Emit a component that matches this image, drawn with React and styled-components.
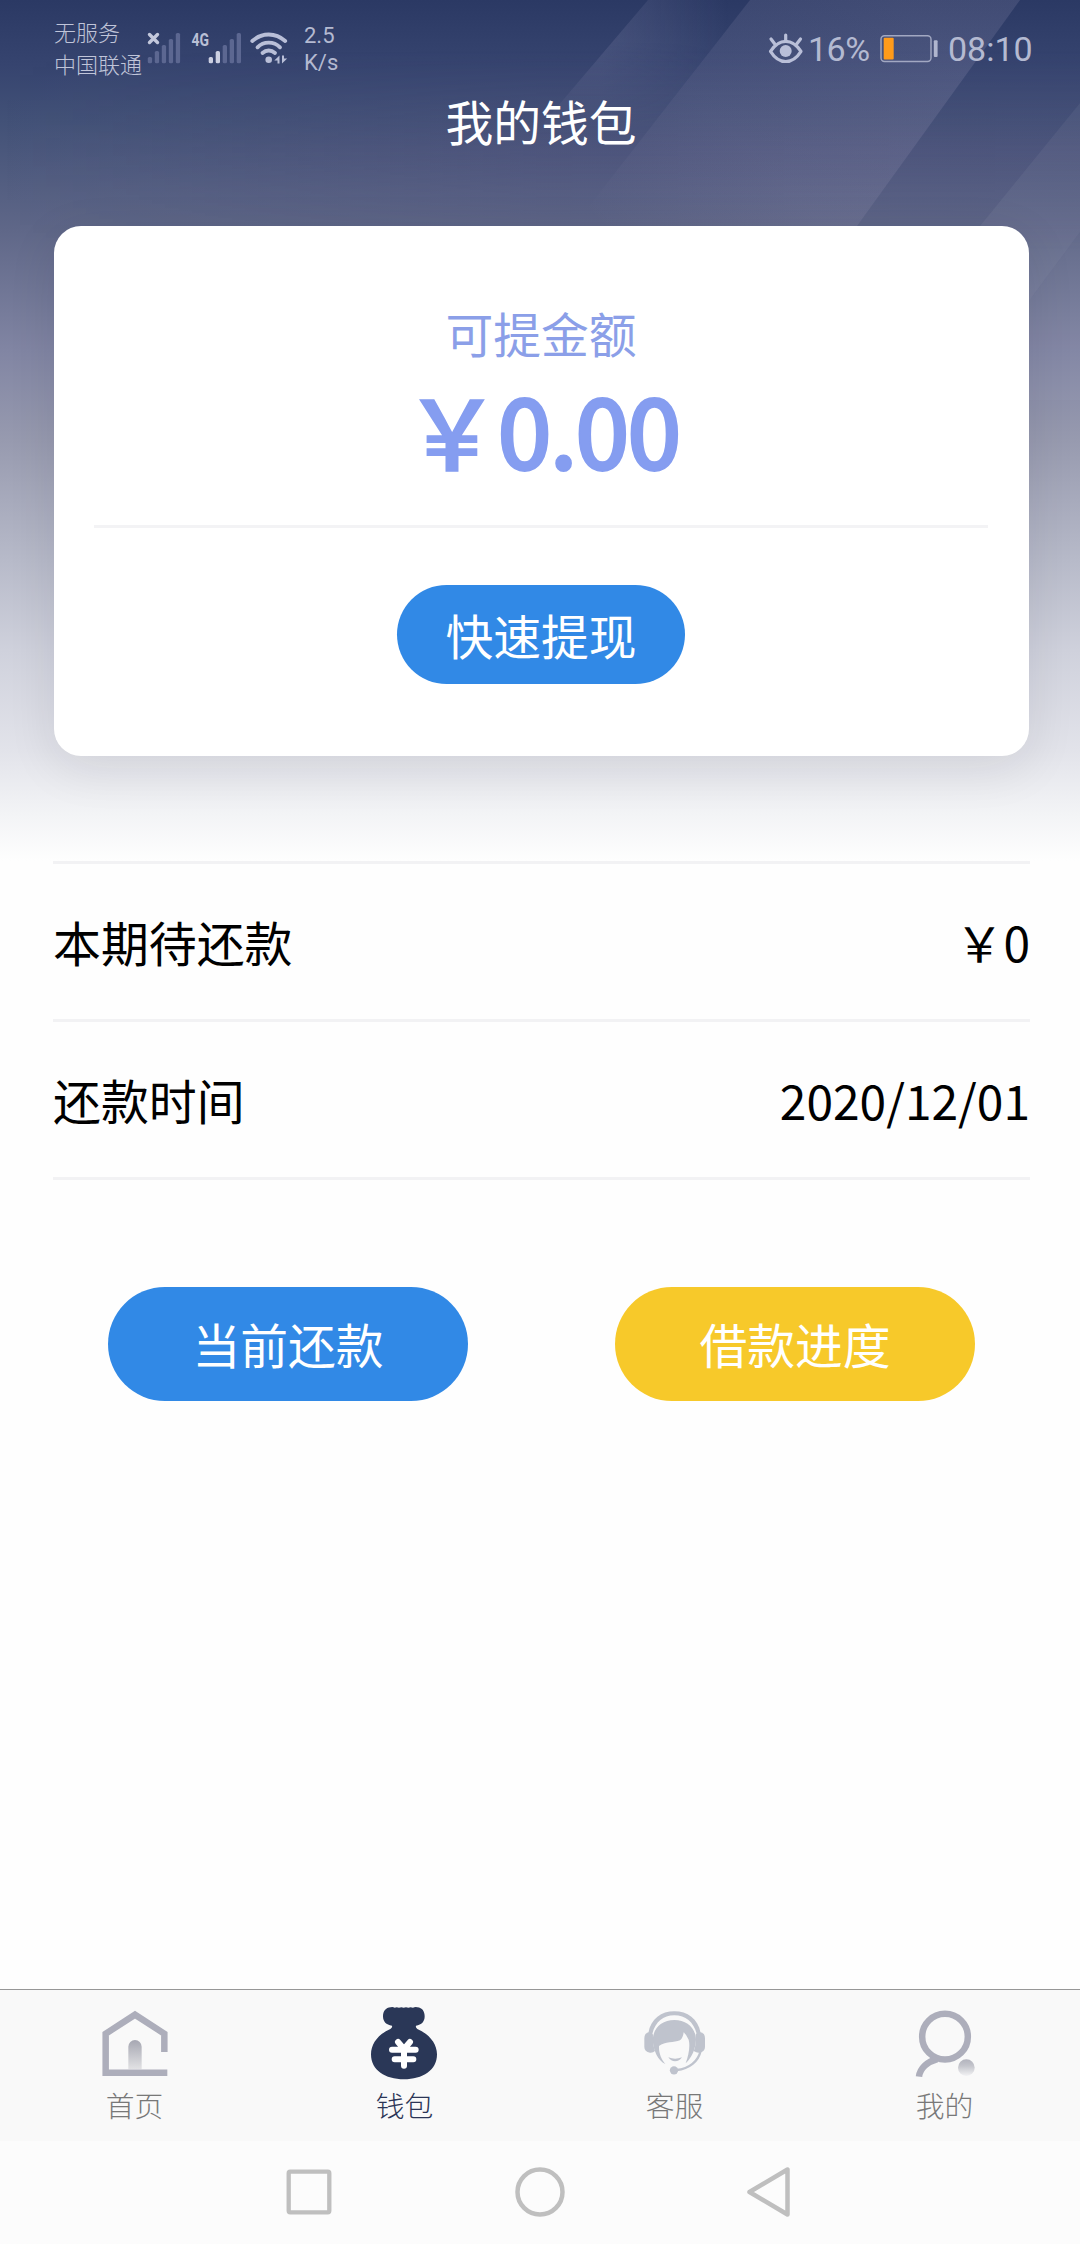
import React, { useState } from "react";
import styled, { createGlobalStyle } from "styled-components";

const GlobalStyle = createGlobalStyle`
  * {
    box-sizing: border-box;
  }
  body {
    margin: 0;
    background: #fefefe;
    font-family: "Noto Sans CJK SC", sans-serif;
  }
  button {
    font-family: inherit;
    border: none;
    padding: 0;
    cursor: pointer;
  }
`;
const Page = styled.div`
  display: flex;
  flex-direction: column;
  width: 1080px;
  height: 2244px;
  overflow: hidden;
`;
const Hero = styled.header`
  position: relative;
  height: 861px;
  background: linear-gradient(
    180deg,
    #2b3964 0px,
    #36446f 65px,
    #425177 120px,
    #5f6788 230px,
    #8185a3 350px,
    #979aaf 440px,
    #b7bac9 560px,
    #cfd1dc 650px,
    #e2e3ea 750px,
    #f3f4f6 815px,
    #fefefe 861px
  );
`;
const Stripes = styled.svg`
  position: absolute;
  top: 0;
  left: 0;
`;
const HeroContent = styled.div`
  position: relative;
`;
const StatusBar = styled.div`
  display: flex;
  justify-content: space-between;
  height: 96px;
  padding: 0 48px 0 54px;
  color: #b4bad1;
`;
const StatusGroup = styled.div`
  display: flex;
  align-items: flex-start;
`;
const Carrier = styled.div`
  width: 92px;
  padding-top: 15px;
  color: #c0c5d9;
  font-size: 22px;
  font-weight: 300;
  line-height: 32px;
  white-space: nowrap;
`;
const NetSpeed = styled.div`
  padding: 22px 0 0 16px;
  font-family: Roboto, sans-serif;
  font-size: 22px;
  line-height: 27px;
`;
const StatusText = styled.div`
  width: ${(props) => props.$width}px;
  padding-top: 29px;
  padding-left: ${(props) => props.$left || 0}px;
  font-family: Roboto, sans-serif;
  font-size: 34px;
  line-height: 40px;
  letter-spacing: ${(props) => props.$spacing || 0}px;
  white-space: nowrap;
`;
const Title = styled.h1`
  margin: 0;
  height: 130px;
  padding: 1px 0 0 2px;
  color: #fff;
  font-size: 47.8px;
  font-weight: 400;
  line-height: 48px;
  text-align: center;
`;
const Card = styled.section`
  display: flex;
  flex-direction: column;
  align-items: center;
  width: 975px;
  height: 530px;
  margin-left: 54px;
  padding: 82px 41px 0 40px;
  border-radius: 27px;
  background: #fff;
  box-shadow: 0 12px 50px rgba(20, 20, 30, 0.09);
`;
const CardLabel = styled.div`
  color: #8b9fe8;
  font-size: 47.8px;
  line-height: 50px;
`;
/* the thin outline brings the medium digits close to bold without widening them */
const Amount = styled.div`
  width: 100%;
  height: 170px;
  padding: 21px 0 0 1px;
  border-bottom: 3px solid #f3f3f5;
  color: #859df0;
  font-size: 96px;
  font-weight: 500;
  line-height: 100px;
  text-align: center;
  letter-spacing: -2.8px;
  -webkit-text-stroke: 1.8px #859df0;
`;
const PillButton = styled.button`
  width: ${(props) => props.$width}px;
  height: ${(props) => props.$height}px;
  margin-top: ${(props) => props.$top || 0}px;
  border-radius: 60px;
  background: ${(props) => props.$color};
  color: #fff;
  font-size: 47.8px;
  line-height: 50px;
`;
const List = styled.div`
  margin: 0 50px 0 53px;
  border-top: 3px solid #f2f2f4;
`;
const Row = styled.div`
  display: flex;
  align-items: center;
  justify-content: space-between;
  height: 158px;
  padding-bottom: 2px;
  border-bottom: 3px solid #f2f2f4;
  color: #000;
  font-size: 47.9px;
  line-height: 50px;
`;
const Actions = styled.div`
  display: flex;
  justify-content: space-between;
  padding: 107px 105px 0 108px;
`;
const TabBar = styled.nav`
  display: flex;
  height: 152px;
  margin-top: auto;
  border-top: 1px solid #969696;
  background: #f9f9f9;
`;
const Tab = styled.button`
  display: flex;
  flex: 1;
  flex-direction: column;
  align-items: center;
  padding-top: 16px;
  background: transparent;
  color: ${(props) => (props.$active ? "#2b3556" : "#787878")};
`;
const TabLabel = styled.span`
  padding-right: 1px;
  font-size: 28.8px;
  font-weight: 300;
  line-height: 49px;
`;
const SystemNav = styled.div`
  display: flex;
  align-items: center;
  justify-content: center;
  gap: 181px;
  height: 103px;
  padding-bottom: 1px;
  background: #fcfcfc;
`;

const barTops = [57, 51, 45, 39, 33];
function Signal({ left, level }) {
  return barTops.map((y, i) => (
    <rect key={y} x={left + i * 7} y={y} width="4.3" height={63.3 - y} rx="1.6"
      fill={i < level ? "#ccd0e2" : "#5c6791"} />
  ));
}

function NoSignalIcon() {
  return (
    <svg width="44" height="70" viewBox="146 0 44 70">
      <Signal left={147.8} level={0} />
      <path d="M149.5 34.5l8 8M157.5 34.5l-8 8" stroke="#c3c8dc" strokeWidth="3.4" strokeLinecap="round" />
    </svg>
  );
}

function MobileIcon() {
  return (
    <svg width="58" height="70" viewBox="190 0 58 70">
      <text x="191.5" y="45.8" textLength="17.5" lengthAdjust="spacingAndGlyphs" fill="#b9bfd5"
        fontFamily="Roboto, sans-serif" fontWeight="700" fontSize="18.5">4G</text>
      <Signal left={208.7} level={2} />
    </svg>
  );
}

function WifiIcon() {
  return (
    <svg width="40" height="70" viewBox="248 0 40 70">
      <g fill="none" stroke="#b9bfd8" strokeWidth="3.8" strokeLinecap="round">
        <path d="M252.3 41Q259.5 34.5 268.7 34.5T285.2 41" />
        <path d="M257.5 47.3Q262 42.7 268.7 42.7T280 47.3" />
        <path d="M262.5 53Q265.3 50.5 268.7 50.5T275 53" />
      </g>
      <circle cx="268.7" cy="59.7" r="3.3" fill="#b9bfd8" />
      <path d="M279.5 55.5v8h-2v-3h-3.2zM282 63.5v-8h2v3h3.2z" fill="#b9bfd8" />
    </svg>
  );
}

function EyeIcon() {
  return (
    <svg width="38" height="70" viewBox="768 0 38 70">
      <g fill="none" stroke="#b9bfd8" strokeWidth="3.2" strokeLinecap="round">
        <path d="M770.5 51.3C775 44.5 780 41.3 785.7 41.3S796.5 44.5 801 51.3C796.5 58.5 791.5 61.5 785.7 61.5S775 58.5 770.5 51.3Z" strokeLinejoin="round" />
        <path d="M785.7 35v6M771 39l4.2 5.5M800.5 39l-4.2 5.5" />
      </g>
      <circle cx="785.7" cy="51" r="6" fill="#b9bfd8" />
    </svg>
  );
}

function BatteryIcon() {
  return (
    <svg width="68" height="70" viewBox="880 0 68 70">
      <rect x="881" y="35.7" width="50" height="25.8" rx="3.5" fill="none" stroke="#a2a8c2" strokeWidth="1.4" />
      <rect x="883.7" y="37.8" width="10" height="21.7" rx="1" fill="#ff9b1a" />
      <rect x="933.8" y="40.3" width="3.8" height="16.8" rx="1" fill="#b0b6ce" />
    </svg>
  );
}

function HomeIcon() {
  return (
    <svg width="74" height="74" viewBox="114 77 222 222">
      <defs>
        <linearGradient id="door" x1="0" y1="0" x2="0" y2="1">
          <stop offset="0" stopColor="#a6a7b2" />
          <stop offset="1" stopColor="#e2e2e4" />
        </linearGradient>
      </defs>
      <path d="M205 267v-68a20 20 0 0 1 40 0v68z" fill="url(#door)" />
      <path d="M313 215V160L225 103L137 160V277H322" fill="none" stroke="#adaebb" strokeWidth="19.5" />
    </svg>
  );
}

function BagIcon() {
  return (
    <svg width="74" height="74" viewBox="924 77 222 222">
      <path fill="#2a3757" d="M992 81Q998 79 1004 82Q1010 79 1017 82Q1024 79 1031 82Q1038 79 1045 82Q1052 79 1059 82Q1066 79 1072 81C1087 82 1094 94 1094 108C1094 124 1085 134 1068 136Q1066 142 1072 146C1105 160 1131 188 1131 222C1131 270 1088 297 1032 297C976 297 933 270 933 222C933 188 958 160 991 146Q998 142 996 136C978 134 969 124 969 108C969 93 977 82 992 81Z" />
      <path d="M1014 185L1032 206L1050 185M996 208H1067M1004 237H1060M1032 206V256" fill="none" stroke="#fff" strokeWidth="18" strokeLinecap="round" strokeLinejoin="round" />
    </svg>
  );
}

function ServiceIcon() {
  return (
    <svg width="74" height="74" viewBox="114 77 222 222">
      <g fill="#bfc3cd">
        <path d="M145 158C153 115 184 93 223 93S294 115 302 158L290 160C280 124 257 105 223 105S167 124 157 160Z" />
        <path d="M147 156Q156 154 159 163Q158 195 165 212Q159 218 150 217Q133 214 133 200V174Q133 158 147 156Z" />
        <path d="M301 156Q290 154 287 163Q289 195 281 212Q290 218 298 217Q315 214 315 200V174Q315 158 301 156Z" />
        <path d="M158 178C160 142 186 119 223 119S287 142 288 178C286 206 277 230 257 249C266 225 271 198 266 178Q260 164 251 156Q249 173 240 180C222 188 195 183 177 197C176 218 184 237 196 251C174 240 160 211 158 178Z" />
        <path d="M205 231Q225 239 246 231Q238 243 225 243Q213 243 205 231Z" />
        <circle cx="222" cy="270" r="12.5" />
      </g>
      <path d="M302 211C295 243 268 265 230 269" fill="none" stroke="#bfc3cd" strokeWidth="7" />
    </svg>
  );
}

function MineIcon() {
  return (
    <svg width="74" height="74" viewBox="924 77 222 222">
      <defs>
        <linearGradient id="dot" x1="0" y1="0" x2="0" y2="1">
          <stop offset="0" stopColor="#b2b3bd" />
          <stop offset="0.4" stopColor="#c4c5cc" />
          <stop offset="1" stopColor="#f2f2f4" />
        </linearGradient>
      </defs>
      <g fill="none" stroke="#adaebb" strokeWidth="19.5">
        <circle cx="1035" cy="169" r="68.5" />
        <path d="M957 289C960 264 982 244 1012 236" />
      </g>
      <circle cx="1099" cy="262" r="25" fill="url(#dot)" />
    </svg>
  );
}

const tabs = [
  { id: "home", name: "首页", Icon: HomeIcon },
  { id: "wallet", name: "钱包", Icon: BagIcon },
  { id: "service", name: "客服", Icon: ServiceIcon },
  { id: "mine", name: "我的", Icon: MineIcon },
];

function App() {
  const [active, setActive] = useState("wallet");
  return (
    <Page>
      <GlobalStyle />
      <Hero>
        <Stripes width="1080" height="861">
          <defs>
            <linearGradient id="fade" gradientUnits="userSpaceOnUse" x1="560" y1="260" x2="860" y2="-40">
              <stop offset="0.12" stopColor="#f0e0f8" stopOpacity="0" />
              <stop offset="0.5" stopColor="#f0e0f8" stopOpacity="0.07" />
              <stop offset="1" stopColor="#f0e0f8" stopOpacity="0.11" />
            </linearGradient>
            <linearGradient id="band" gradientUnits="userSpaceOnUse" x1="600" y1="0" x2="730" y2="0">
              <stop offset="0" stopColor="#d0c8e8" stopOpacity="0.13" />
              <stop offset="1" stopColor="#d0c8e8" stopOpacity="0" />
            </linearGradient>
            <linearGradient id="down" gradientUnits="userSpaceOnUse" x1="0" y1="40" x2="0" y2="135">
              <stop offset="0" stopColor="#fff" />
              <stop offset="1" stopColor="#000" />
            </linearGradient>
            <mask id="bandMask">
              <rect width="1080" height="300" fill="url(#down)" />
            </mask>
            <linearGradient id="tint" x1="0" y1="0" x2="1" y2="0">
              <stop offset="0" stopColor="#604a80" stopOpacity="0" />
              <stop offset="0.5" stopColor="#604a80" stopOpacity="0.16" />
              <stop offset="1" stopColor="#604a80" stopOpacity="0.14" />
            </linearGradient>
            <linearGradient id="tintDown" x1="0" y1="0" x2="0" y2="1">
              <stop offset="0" stopColor="#000" />
              <stop offset="0.5" stopColor="#fff" />
              <stop offset="1" stopColor="#000" />
            </linearGradient>
            <mask id="tintMask">
              <rect y="50" width="1080" height="200" fill="url(#tintDown)" />
            </mask>
          </defs>
          <rect y="50" width="1080" height="200" fill="url(#tint)" mask="url(#tintMask)" />
          <path d="M648 0H750L622 165L512 160Z" fill="url(#band)" mask="url(#bandMask)" />
          <path d="M750 0H1020L857 226L800 305H512Z" fill="url(#fade)" />
          <path d="M1080 103L980 226L860 400H960L1034 294L1080 232Z" fill="#fff" fillOpacity="0.05" />
          <path d="M1080 232L1034 294L960 400H1080Z" fill="#fff" fillOpacity="0.025" />
        </Stripes>
        <HeroContent>
          <StatusBar>
            <StatusGroup>
              <Carrier>
                无服务
                <br />
                中国联通
              </Carrier>
              <NoSignalIcon />
              <MobileIcon />
              <WifiIcon />
              <NetSpeed>
                2.5
                <br />
                K/s
              </NetSpeed>
            </StatusGroup>
            <StatusGroup>
              <EyeIcon />
              <StatusText $width={74} $left={2} $spacing={-0.5}>16%</StatusText>
              <BatteryIcon />
              <StatusText $width={84}>08:10</StatusText>
            </StatusGroup>
          </StatusBar>
          <Title>我的钱包</Title>
          <Card>
            <CardLabel>可提金额</CardLabel>
            <Amount>￥0.00</Amount>
            <PillButton $width={288} $height={99} $top={57} $color="#3189e6">快速提现</PillButton>
          </Card>
        </HeroContent>
      </Hero>
      <List>
        <Row>
          <span>本期待还款</span>
          <span>￥0</span>
        </Row>
        <Row>
          <span>还款时间</span>
          <span>2020/12/01</span>
        </Row>
      </List>
      <Actions>
        <PillButton $width={360} $height={114} $color="#3189e6">当前还款</PillButton>
        <PillButton $width={360} $height={114} $color="#f7c92a">借款进度</PillButton>
      </Actions>
      <TabBar>
        {tabs.map(({ id, name, Icon }) => (
          <Tab key={id} $active={active === id} onClick={() => setActive(id)}>
            <Icon />
            <TabLabel>{name}</TabLabel>
          </Tab>
        ))}
      </TabBar>
      <SystemNav>
        <svg width="50" height="50" viewBox="0 0 50 50" fill="none" stroke="#bfbfbf" strokeWidth="4.3">
          <rect x="4.7" y="4.7" width="40.6" height="40.6" rx="1.5" />
        </svg>
        <svg width="50" height="50" viewBox="0 0 50 50" fill="none" stroke="#bfbfbf" strokeWidth="4.5">
          <circle cx="25" cy="25" r="22.5" />
        </svg>
        <svg width="50" height="50" viewBox="0 0 50 50" fill="none" stroke="#bfbfbf" strokeWidth="4.5">
          <path d="M3.5 25L41.5 2.5V47.5Z" strokeLinejoin="round" />
        </svg>
      </SystemNav>
    </Page>
  );
}

export default App;
